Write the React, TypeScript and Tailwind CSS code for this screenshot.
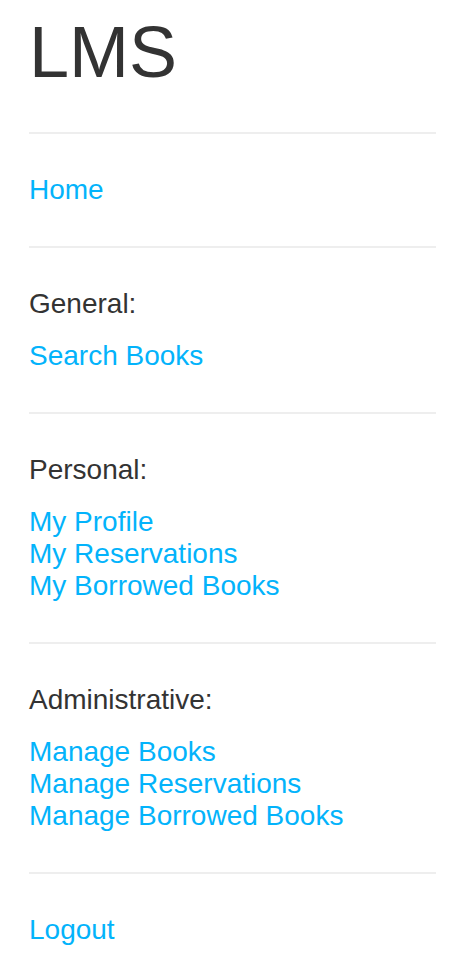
import React from "react";

const Hr = () => <div className="h-[2px] w-full bg-[#eeeeee]" />;

const Link = ({ children }: { children: React.ReactNode }) => (
  <a href="#" className="block text-[#03b3fb] no-underline">
    {children}
  </a>
);

export default function App() {
  return (
    <div
      className="min-h-[965px] bg-white pl-[29px] pr-[30px] text-[28px] leading-[32px] text-[#333333]"
      style={{ fontFamily: '"Liberation Sans", Arial, sans-serif' }}
    >
      <h1 className="pt-[12px] pb-[40px] text-[72px] leading-[80px] font-normal">LMS</h1>
      <Hr />
      <div className="py-[40px]">
        <Link>Home</Link>
      </div>
      <Hr />
      <div className="py-[40px]">
        <div className="mb-[20px]">General:</div>
        <Link>Search Books</Link>
      </div>
      <Hr />
      <div className="py-[40px]">
        <div className="mb-[20px]">Personal:</div>
        <Link>My Profile</Link>
        <Link>My Reservations</Link>
        <Link>My Borrowed Books</Link>
      </div>
      <Hr />
      <div className="py-[40px]">
        <div className="mb-[20px]">Administrative:</div>
        <Link>Manage Books</Link>
        <Link>Manage Reservations</Link>
        <Link>Manage Borrowed Books</Link>
      </div>
      <Hr />
      <div className="pt-[40px]">
        <Link>Logout</Link>
      </div>
    </div>
  );
}
